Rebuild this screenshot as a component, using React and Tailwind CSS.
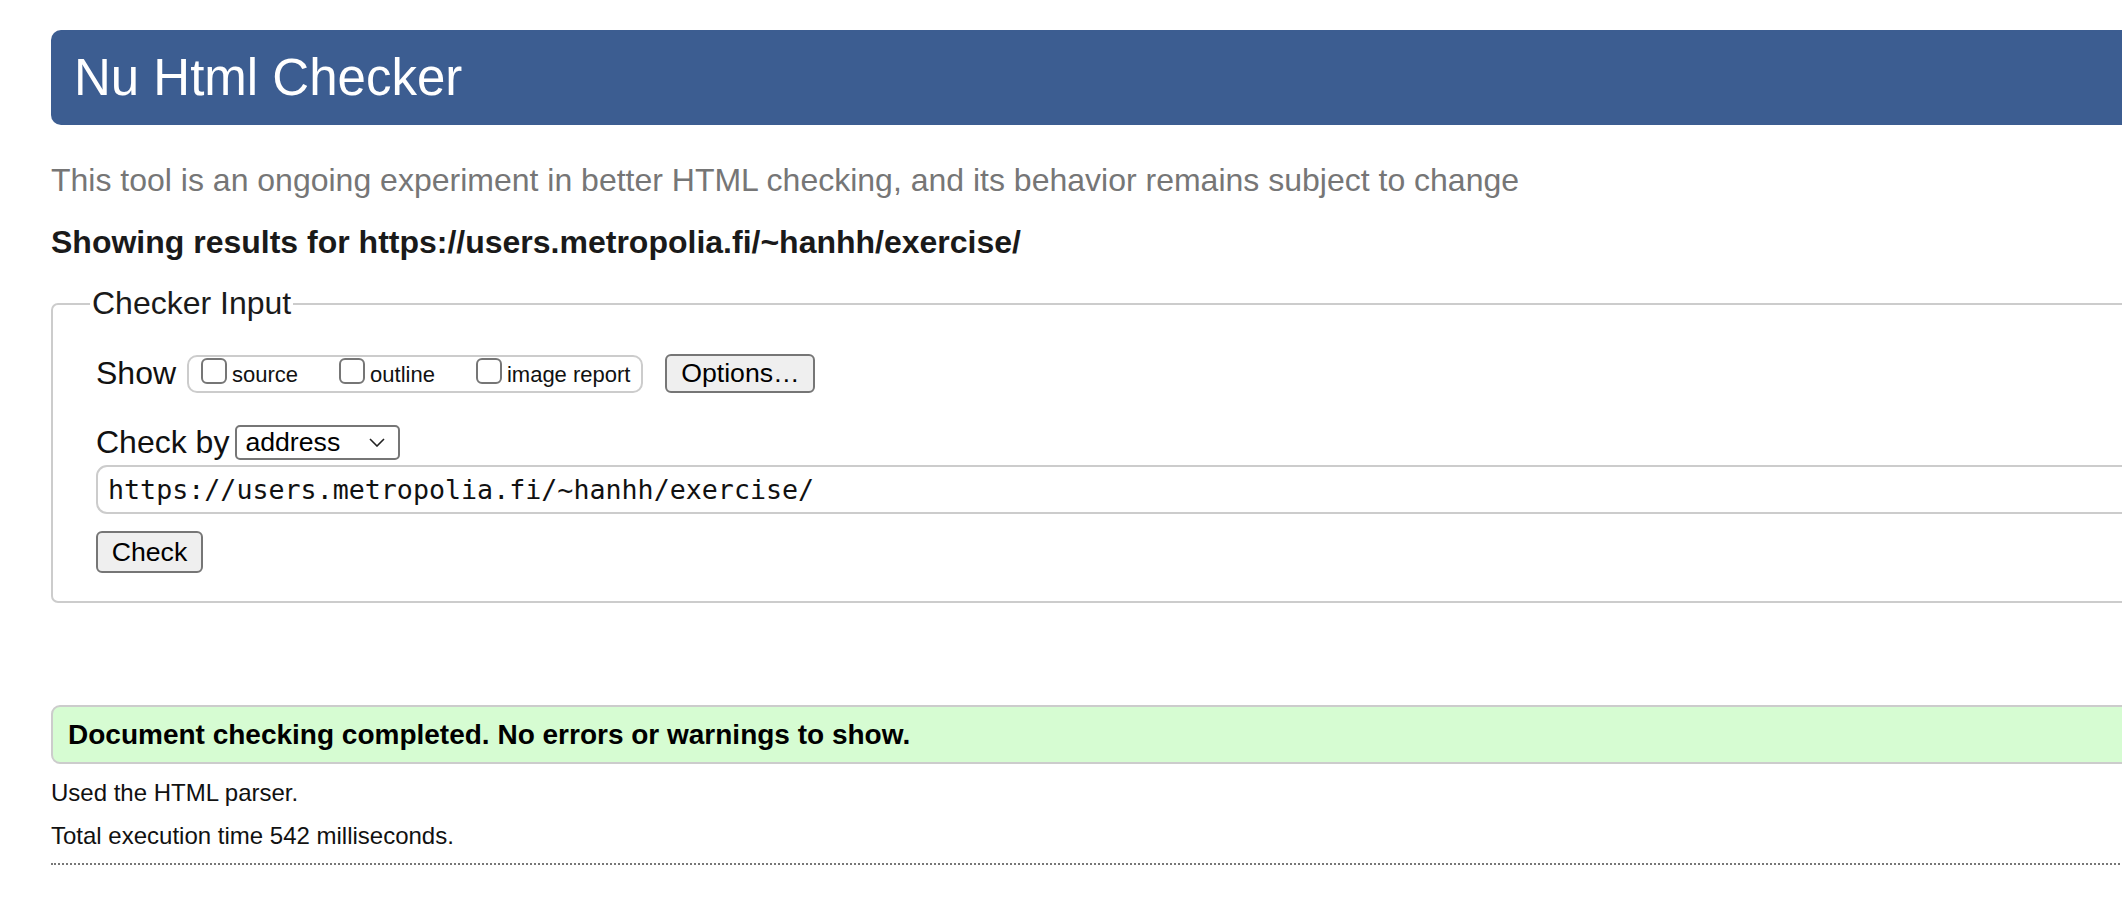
export default function App() {
  const sans = { fontFamily: '"Liberation Sans", Arial, Helvetica, sans-serif' };
  return (
    <div className="w-full h-[924px] overflow-hidden bg-white text-[#111]" style={sans}>
      <div className="ml-[51px] w-[2300px] pt-[30px]">
        <h1 className="h-[95px] rounded-[10px] bg-[#3c5d91] pl-[23px] flex items-center text-white text-[51px] leading-none font-normal">
          Nu Html Checker
        </h1>

        <p className="mt-[37px] text-[32px] leading-[37px] text-[#767676]">
          This tool is an ongoing experiment in better HTML checking, and its behavior remains subject to change
        </p>

        <p className="mt-[25px] text-[32px] leading-[37px] font-bold text-[#1a1a1a]">
          Showing results for https://users.metropolia.fi/~hanhh/exercise/
        </p>

        <fieldset className="mt-[24px] border-2 border-[#cccccc] rounded-tl-[7px] rounded-bl-[7px] px-[43px] pb-[28px]">
          <legend className="-ml-[6px] px-[2px] text-[32px] leading-[37px] text-[#1a1a1a]">Checker Input</legend>

          <div className="mt-[32px] flex items-center h-[39px]">
            <span className="text-[32px] leading-[37px]">Show</span>
            <div className="ml-[11px] h-[38px] border-2 border-[#cccccc] rounded-[10px] pl-[12px] pr-[11px] flex items-start gap-[41px]">
              {['source', 'outline', 'image report'].map((label) => (
                <label key={label} className="flex items-start">
                  <span className="mt-[1px] w-[26px] h-[26px] rounded-[6px] border-2 border-[#767676] bg-white" />
                  <span className="ml-[5px] mt-[5px] text-[22px] leading-[26px]">{label}</span>
                </label>
              ))}
            </div>
            <button className="ml-[22px] h-[39px] w-[150px] bg-[#efefef] border-2 border-[#767676] rounded-[6px] text-[26.67px] leading-none text-black">
              Options…
            </button>
          </div>

          <div className="mt-[31px] flex items-center h-[37px]">
            <span className="text-[32px] leading-[37px]">Check by</span>
            <div className="ml-[6px] h-[35px] w-[165px] border-2 border-[#767676] rounded-[5px] bg-white flex items-center pl-[8px] pr-[13px] justify-between">
              <span className="text-[26.67px] leading-none text-black">address</span>
              <svg width="16" height="9" viewBox="0 0 16 9" fill="none">
                <path d="M1 1 L8 8 L15 1" stroke="#222" strokeWidth="1.6" />
              </svg>
            </div>
          </div>

          <div
            className="mt-[4px] h-[49px] border-2 border-[#cccccc] rounded-[11px] flex items-center pl-[10px] text-[26.67px] text-[#111]"
            style={{ fontFamily: '"DejaVu Sans Mono", "Liberation Mono", monospace' }}
          >
            https://users.metropolia.fi/~hanhh/exercise/
          </div>

          <button className="mt-[17px] h-[42px] w-[107px] bg-[#efefef] border-2 border-[#767676] rounded-[6px] text-[26.67px] leading-none text-black">
            Check
          </button>
        </fieldset>

        <div className="mt-[102px] h-[59px] border-2 border-[#cccccc] rounded-l-[9px] bg-[#d6fcd2] flex items-center pl-[15px] text-[28px] font-bold text-black">
          Document checking completed. No errors or warnings to show.
        </div>

        <p className="mt-[15px] text-[24px] leading-[28px] text-[#111]">Used the HTML parser.</p>
        <p className="mt-[15px] text-[24px] leading-[28px] text-[#111]">Total execution time 542 milliseconds.</p>

        <div className="mt-[13px] border-t-2 border-dotted border-[#777777]" />
      </div>
    </div>
  );
}
